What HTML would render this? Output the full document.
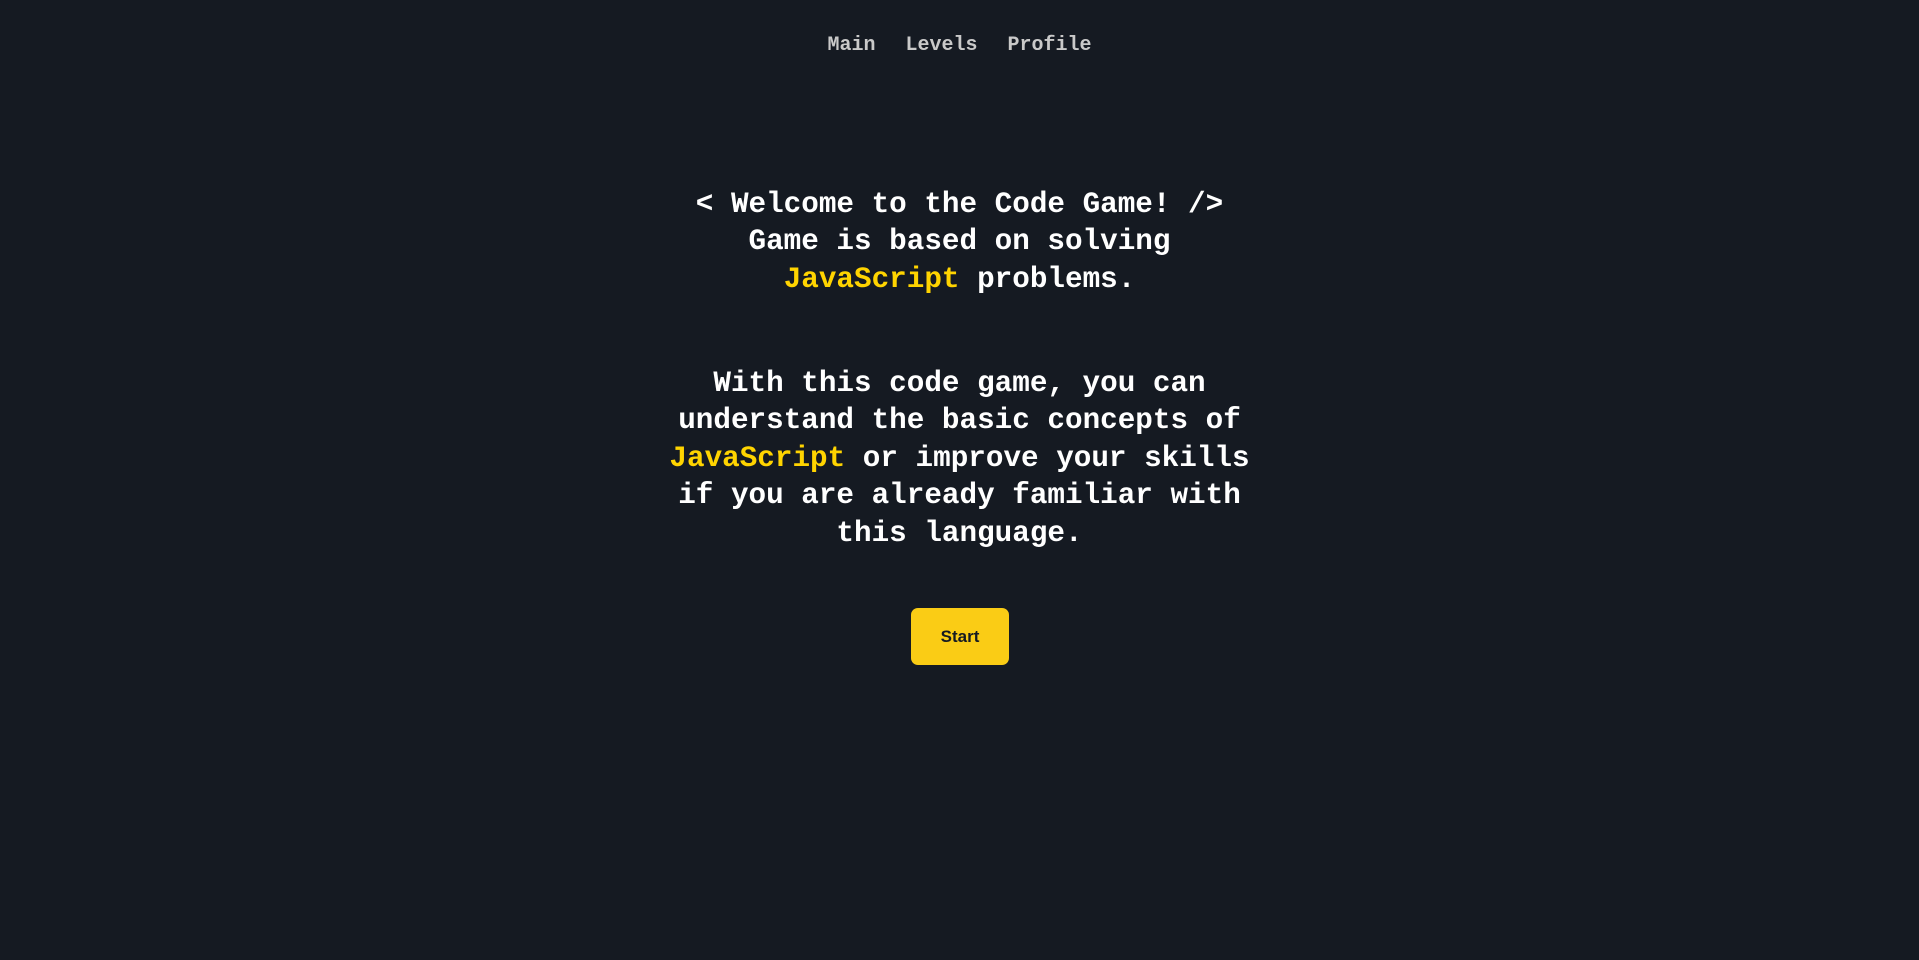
<!DOCTYPE html>
<html><head><style>
html,body{margin:0;padding:0;}
body{width:1919px;height:960px;background:#151a22;overflow:hidden;position:relative;font-family:"Liberation Mono",monospace;font-weight:bold;}
.nav{position:absolute;top:33px;left:0;width:1919px;text-align:center;font-size:20px;color:#c9c9c9;line-height:26px;}
.nav span{margin:0 15px;}
.t{position:absolute;left:0;width:1919px;text-align:center;color:#fff;font-size:29.3px;line-height:37.4px;white-space:pre;}
.y{color:#ffd400;}
.btn{position:absolute;left:911px;top:608px;width:98px;height:57px;background:#facc15;border-radius:7px;font-family:"Liberation Sans",Arial,sans-serif;font-weight:bold;font-size:17px;color:#151a22;text-align:center;line-height:57px;}
</style></head><body>
<div class="nav"><span>Main</span><span>Levels</span><span>Profile</span></div>
<div class="t" style="top:186px">&lt; Welcome to the Code Game! /&gt;
Game is based on solving
<span class="y">JavaScript</span> problems.</div>
<div class="t" style="top:365px">With this code game, you can
understand the basic concepts of
<span class="y">JavaScript</span> or improve your skills
if you are already familiar with
this language.</div>
<div class="btn">Start</div>
</body></html>
